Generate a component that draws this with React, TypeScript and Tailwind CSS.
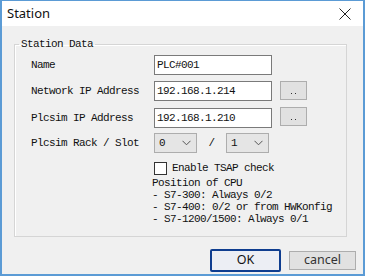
import React from "react";

const mono = { fontFamily: '"Liberation Mono", "DejaVu Sans Mono", monospace' };
const ui = { fontFamily: '"Noto Sans", "Open Sans", sans-serif' };

function Chevron() {
  return (
    <svg width="9" height="6" viewBox="0 0 9 6" className="text-[#555]">
      <path d="M0.5 0.8 L4.5 4.8 L8.5 0.8" fill="none" stroke="currentColor" strokeWidth="1" />
    </svg>
  );
}

function Select({ value }: { value: string }) {
  return (
    <div className="w-[43px] h-[20px] border border-[#adadad] bg-[#e5e5e5] flex items-center justify-between pl-[4px] pr-[5px] text-[11px] tracking-[-0.6px] text-[#111]" style={mono}>
      <span>{value}</span>
      <Chevron />
    </div>
  );
}

function DotsButton() {
  return (
    <div className="w-[27px] h-[19px] border border-[#adadad] bg-[#e1e1e1] flex items-end justify-center pb-[5px] gap-[3px]">
      <span className="w-[1px] h-[1px] bg-[#333]" />
      <span className="w-[1px] h-[1px] bg-[#333]" />
    </div>
  );
}

function TextInput({ value }: { value: string }) {
  return (
    <div className="w-[118px] h-[20px] border border-[#7a7a7a] bg-white flex items-center pl-[2px] text-[11px] tracking-[-0.6px] text-[#111]" style={mono}>
      {value}
    </div>
  );
}

export default function App() {
  return (
    <div className="relative w-[365px] h-[276px] overflow-hidden border-2 border-t border-[#5b9bd5] bg-[#f0f0f0] flex flex-col">
      <div className="h-[25px] bg-white flex items-center justify-between pl-[5px] pr-[12px]" style={ui}>
        <span className="text-[13px] text-[#111]">Station</span>
        <svg width="12" height="12" viewBox="0 0 12 12">
          <path d="M0.5 0.5 L11.5 11.5 M11.5 0.5 L0.5 11.5" stroke="#222" strokeWidth="1" fill="none" />
        </svg>
      </div>
      <div className="flex-1 flex flex-col pl-[12px] pr-[7px]">
        <fieldset className="mt-[12px] w-[333px] h-[199px] border border-[#d5d5d5] shadow-[inset_1px_1px_0_#ffffff]">
          <legend className="ml-[4px] px-[2px] text-[11px] tracking-[-0.6px] leading-[12px] text-[#111]" style={mono}>
            Station Data
          </legend>
          <div className="pl-[16px] pt-[5px] flex flex-col text-[11px] tracking-[-0.6px] text-[#111]" style={mono}>
            <div className="flex items-center h-[20px]">
              <span className="w-[123px]">Name</span>
              <TextInput value="PLC#001" />
            </div>
            <div className="flex items-center h-[20px] mt-[6px]">
              <span className="w-[123px]">Network IP Address</span>
              <TextInput value="192.168.1.214" />
              <div className="ml-[8px] -mt-[2px]"><DotsButton /></div>
            </div>
            <div className="flex items-center h-[20px] mt-[7px]">
              <span className="w-[123px]">Plcsim IP Address</span>
              <TextInput value="192.168.1.210" />
              <div className="ml-[8px] -mt-[4px]"><DotsButton /></div>
            </div>
            <div className="flex items-center h-[20px] mt-[5px]">
              <span className="w-[123px]">Plcsim Rack / Slot</span>
              <Select value="0" />
              <span className="w-[29px] text-center">/</span>
              <Select value="1" />
            </div>
            <div className="flex items-center mt-[7px] pl-[123px]">
              <span className="w-[13px] h-[13px] border border-[#333] bg-white" />
              <span className="ml-[5px]">Enable TSAP check</span>
            </div>
            <div className="pl-[121px] leading-[12px]">
              <div>Position of CPU</div>
              <div>- S7-300: Always 0/2</div>
              <div>- S7-400: 0/2 or from HWKonfig</div>
              <div>- S7-1200/1500: Always 0/1</div>
            </div>
          </div>
        </fieldset>
        <div className="flex justify-end items-center gap-[8px] mt-[12px]" style={ui}>
          <div className="w-[71px] h-[23px] rounded-[2px] border-2 border-[#0f3d8f] bg-[#eceef4] flex items-center justify-center text-[12.5px] text-[#111]">
            OK
          </div>
          <div className="w-[67px] h-[19px] border border-[#adadad] bg-[#e1e1e1] flex items-center justify-center text-[12.5px] text-[#333]">
            cancel
          </div>
        </div>
      </div>
    </div>
  );
}
